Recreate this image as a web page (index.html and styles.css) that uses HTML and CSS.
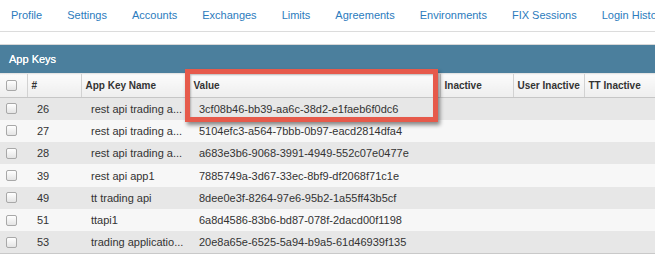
FILE: index.html
```html
<!DOCTYPE html>
<html lang="en">
<head>
    <meta charset="UTF-8" />
    <meta name="viewport" content="width=device-width, initial-scale=1.0" />
    <link rel="stylesheet" href="styles.css">
</head>
<body>
    <nav class="tabs">
        <a href="#">Profile</a>
        <a href="#">Settings</a>
        <a href="#">Accounts</a>
        <a href="#">Exchanges</a>
        <a href="#">Limits</a>
        <a href="#">Agreements</a>
        <a href="#">Environments</a>
        <a href="#">FIX Sessions</a>
        <a href="#">Login History</a>
    </nav>
    <section class="panel">
        <h2 class="panel-title">App Keys</h2>
        <div class="table-wrap">
            <table class="keys">
                <colgroup>
                    <col class="col-check" />
                    <col class="col-id" />
                    <col class="col-name" />
                    <col class="col-value" />
                    <col class="col-inactive" />
                    <col class="col-user" />
                    <col class="col-tt" />
                </colgroup>
                <thead>
                    <tr>
                        <th><input type="checkbox" class="check" /></th>
                        <th>#</th>
                        <th>App Key Name</th>
                        <th>Value</th>
                        <th>Inactive</th>
                        <th>User Inactive</th>
                        <th>TT Inactive</th>
                    </tr>
                </thead>
                <tbody>
                    <tr>
                        <td><input type="checkbox" class="check" /></td>
                        <td>26</td>
                        <td>rest api trading a...</td>
                        <td>3cf08b46-bb39-aa6c-38d2-e1faeb6f0dc6</td>
                        <td></td><td></td><td></td>
                    </tr>
                    <tr>
                        <td><input type="checkbox" class="check" /></td>
                        <td>27</td>
                        <td>rest api trading a...</td>
                        <td>5104efc3-a564-7bbb-0b97-eacd2814dfa4</td>
                        <td></td><td></td><td></td>
                    </tr>
                    <tr>
                        <td><input type="checkbox" class="check" /></td>
                        <td>28</td>
                        <td>rest api trading a...</td>
                        <td>a683e3b6-9068-3991-4949-552c07e0477e</td>
                        <td></td><td></td><td></td>
                    </tr>
                    <tr>
                        <td><input type="checkbox" class="check" /></td>
                        <td>39</td>
                        <td>rest api app1</td>
                        <td>7885749a-3d67-33ec-8bf9-df2068f71c1e</td>
                        <td></td><td></td><td></td>
                    </tr>
                    <tr>
                        <td><input type="checkbox" class="check" /></td>
                        <td>49</td>
                        <td>tt trading api</td>
                        <td>8dee0e3f-8264-97e6-95b2-1a55ff43b5cf</td>
                        <td></td><td></td><td></td>
                    </tr>
                    <tr>
                        <td><input type="checkbox" class="check" /></td>
                        <td>51</td>
                        <td>ttapi1</td>
                        <td>6a8d4586-83b6-bd87-078f-2dacd00f1198</td>
                        <td></td><td></td><td></td>
                    </tr>
                    <tr>
                        <td><input type="checkbox" class="check" /></td>
                        <td>53</td>
                        <td>trading applicatio...</td>
                        <td>20e8a65e-6525-5a94-b9a5-61d46939f135</td>
                        <td></td><td></td><td></td>
                    </tr>
                </tbody>
            </table>
            <div class="callout"></div>
        </div>
    </section>
</body>
</html>
```

FILE: styles.css
```css
html, body {
    margin: 0;
    padding: 0;
    font-family: 'Liberation Sans', Arial, sans-serif;
    color: #333;
    background-color: #fff;
    overflow: hidden;
}
* {
    box-sizing: border-box;
}
.tabs {
    display: flex;
    height: 32px;
    margin-left: -1.5px;
    border-bottom: 1px solid #dcdcdc;
    white-space: nowrap;
}
.tabs > a {
    padding: 0 12.5px;
    line-height: 30px;
    font-size: 11px;
    color: #2b7bbd;
    text-decoration: none;
}
.panel {
    margin-top: 12px;
    border-top: 1px solid #d8d8d8;
}
.panel-title {
    margin: 0;
    height: 28px;
    padding-left: 9px;
    line-height: 29px;
    font-size: 11px;
    font-weight: normal;
    color: #fff;
    background-color: #4b7f9d;
    text-shadow: 0 0 0.4px #fff;
}
.table-wrap {
    position: relative;
}
.keys {
    width: 655px;
    table-layout: fixed;
    border-collapse: collapse;
    border-bottom: 1px solid #c9c9c9;
}
.col-check { width: 27px; }
.col-id { width: 54px; }
.col-name { width: 108px; }
.col-value { width: 251px; }
.col-inactive { width: 73px; }
.col-user { width: 71px; }
.col-tt { width: 71px; }
.keys th {
    height: 24px;
    padding: 0 0 0 4px;
    text-align: left;
    font-size: 10px;
    font-weight: bold;
    color: #333;
    background: linear-gradient(#fbfbfb, #eeeeee);
    border-top: 1px solid #e4e4e4;
    border-bottom: 1px solid #c6c6c6;
    border-left: 1px solid #d2d2d2;
}
.keys th:first-child {
    border-left: none;
    padding-left: 6px;
}
.keys td {
    height: 22.3px;
    padding: 0 0 0 10px;
    font-size: 11px;
    color: #333;
    white-space: nowrap;
    overflow: hidden;
}
.keys td:first-child {
    padding-left: 6px;
}
.keys tbody tr:nth-child(odd) {
    background-color: #e7e7e7;
}
.keys tbody tr:nth-child(even) {
    background-color: #f7f7f7;
}
.check {
    -webkit-appearance: none;
    appearance: none;
    display: block;
    width: 11px;
    height: 11px;
    margin: 0;
    border: 1px solid #a8a8a8;
    border-radius: 2px;
    background: linear-gradient(#ffffff, #e4e4e4);
}
/* annotation around the value column */
.callout {
    position: absolute;
    left: 185px;
    top: -4px;
    width: 253px;
    height: 53px;
    border: 5px solid #e65a4b;
    box-shadow: 2px 3px 4px rgba(0, 0, 0, 0.45), inset 1px 1px 2px rgba(0, 0, 0, 0.25);
}
```
